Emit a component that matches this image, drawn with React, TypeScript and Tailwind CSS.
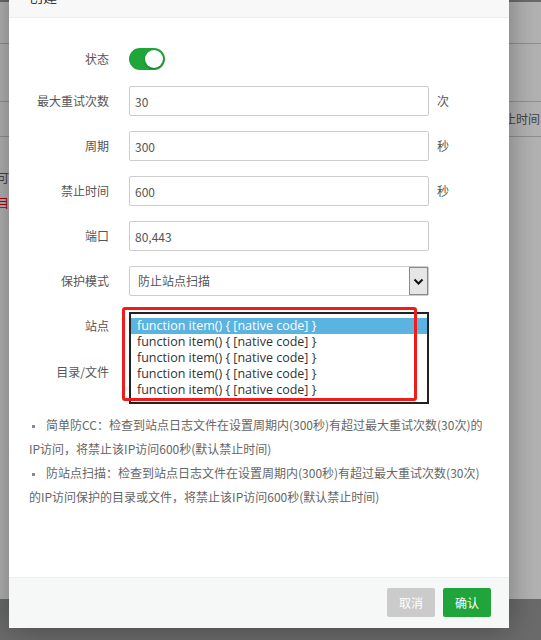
import { useState } from "react";

function Field({ label, value, unit }: { label: string; value: string; unit?: string }) {
  return (
    <div className="flex h-[30px] items-center">
      <label className="w-[80px] text-right text-[12px] text-[#555]">{label}</label>
      <input
        readOnly
        value={value}
        className="ml-[20px] h-[30px] w-[300px] rounded-[2px] border border-[#ccc] bg-white px-[5px] text-[12px] text-[#555] outline-none"
      />
      {unit && <span className="ml-[8px] text-[12px] text-[#555]">{unit}</span>}
    </div>
  );
}

function Bullet() {
  return <span className="mr-[11px] ml-[3px] inline-block h-[3px] w-[3px] bg-[#888] align-middle" />;
}

function App() {
  const [enabled, setEnabled] = useState(true);
  const sites = Array.from({ length: 5 }, () => "function item() { [native code] }");

  return (
    <div className="relative h-[640px] overflow-hidden bg-[#b3b3b3] font-['Noto_Sans_CJK_SC',sans-serif]">
      {/* page behind the modal */}
      <div className="h-[2px] bg-[#6b6b6b]" />
      <div className="h-[42px] border-b border-[#909090]" />
      <div className="h-[58px] border-b border-[#909090]" />
      <div className="flex h-[35px] items-center border-b border-[#909090]">
        <span className="ml-[492px] whitespace-nowrap text-[12px] text-[#444]">禁止时间</span>
      </div>
      <div className="h-[462px] pt-[28px]">
        <div className="flex w-[9px] flex-col items-end overflow-hidden text-[12px] leading-[25px]">
          <div className="whitespace-nowrap text-[#444]">访问不可</div>
          <div className="whitespace-nowrap text-[#b00000]">保护目</div>
        </div>
      </div>
      <div className="h-[41px] bg-[#6b6b6b]" />

      {/* modal */}
      <div className="absolute left-[9px] top-[-25px] w-[500px] bg-white shadow-[0_0_30px_rgba(0,0,0,0.35)]">
        <div className="flex h-[43px] items-center border-b border-[#eee] bg-[#f8f8f8] pl-[20px] text-[14px] text-[#333]">
          创建
        </div>

        <div className="h-[559px] px-[20px] pt-[26px]">
          <div className="flex h-[30px] items-center">
            <label className="w-[80px] text-right text-[12px] text-[#555]">状态</label>
            <button
              onClick={() => setEnabled(!enabled)}
              className={`relative ml-[20px] h-[22px] w-[36px] rounded-full ${enabled ? "bg-[#20a53a]" : "bg-[#ddd]"}`}
            >
              <span
                className={`absolute top-[2px] h-[18px] w-[18px] rounded-full bg-white shadow-[0_1px_2px_rgba(0,0,0,0.3)] ${enabled ? "right-[2px]" : "left-[2px]"}`}
              />
            </button>
          </div>

          <div className="mt-[12px] flex flex-col gap-[15px]">
            <Field label="最大重试次数" value="30" unit="次" />
            <Field label="周期" value="300" unit="秒" />
            <Field label="禁止时间" value="600" unit="秒" />
            <Field label="端口" value="80,443" />
            <div className="flex h-[30px] items-center">
              <label className="w-[80px] text-right text-[12px] text-[#555]">保护模式</label>
              <div className="ml-[20px] flex h-[30px] w-[300px] items-stretch rounded-[2px] border border-[#ccc] bg-white">
                <span className="flex flex-1 items-center pl-[8px] text-[12px] text-[#555]">防止站点扫描</span>
                <span className="flex w-[19px] items-center justify-center border border-[#8a8a8a] bg-[#e6e6e6]">
                  <svg width="11" height="7" viewBox="0 0 11 7">
                    <path d="M1.5 1.5 L5.5 5.5 L9.5 1.5" fill="none" stroke="#111" strokeWidth="2" />
                  </svg>
                </span>
              </div>
            </div>
          </div>

          <div className="mt-[16px] flex">
            <div className="w-[80px] pt-[6px] text-right text-[12px] leading-[16px] text-[#555]">
              <div>站点</div>
              <div className="mt-[30px]">目录/文件</div>
            </div>
            <div className="relative ml-[20px] w-[300px] border-2 border-[#222] bg-white py-[4px] font-['Open_Sans',sans-serif] text-[12.5px] leading-[16px] text-[#333]">
              {sites.map((s, i) => (
                <div
                  key={i}
                  className={`h-[16px] whitespace-nowrap pl-[6px] ${i === 0 ? "bg-[#5bb3e0] text-white" : ""}`}
                >
                  {s}
                </div>
              ))}
              <span className="absolute left-[-9px] top-[-7px] h-[94px] w-[295px] rounded-[3px] border-[3px] border-[#f01c1c]" />
            </div>
          </div>

          <div className="mt-[9px] text-[12px] leading-[24px] text-[#666]">
            <p className="whitespace-nowrap">
              <Bullet />
              简单防CC：检查到站点日志文件在设置周期内(300秒)有超过最大重试次数(30次)的
            </p>
            <p className="whitespace-nowrap">IP访问，将禁止该IP访问600秒(默认禁止时间)</p>
            <p className="whitespace-nowrap">
              <Bullet />
              防站点扫描：检查到站点日志文件在设置周期内(300秒)有超过最大重试次数(30次)
            </p>
            <p className="whitespace-nowrap">的IP访问保护的目录或文件，将禁止该IP访问600秒(默认禁止时间)</p>
          </div>
        </div>

        <div className="flex h-[51px] items-start justify-end gap-[8px] border-t border-[#eee] bg-[#f6f7f7] pr-[18px] pt-[10px]">
          <button className="h-[29px] w-[48px] rounded-[2px] bg-[#cbcbcb] text-[12px] text-white">取消</button>
          <button className="h-[29px] w-[48px] rounded-[2px] bg-[#20a53a] text-[12px] text-white">确认</button>
        </div>
      </div>
    </div>
  );
}

export default App;
